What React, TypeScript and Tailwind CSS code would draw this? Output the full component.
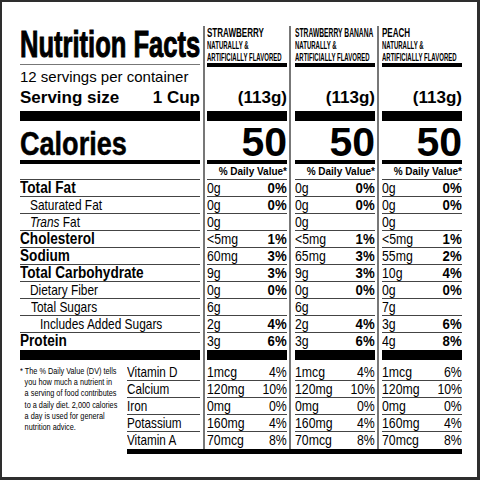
import React from 'react';

const SANS = "font-['Liberation_Sans',Arial,sans-serif]";

// Liberation Sans squeezed horizontally stands in for Helvetica Condensed
const Narrow: React.FC<{ className?: string; children: React.ReactNode }> = ({ className = 'origin-left scale-x-[0.82]', children }) => (
    <span className={`inline-block whitespace-nowrap ${className}`}>{children}</span>
);

type Nutrient = { label: React.ReactNode; bold?: boolean; indent?: string };

const NUTRIENTS: Nutrient[] = [
    { label: 'Total Fat', bold: true },
    { label: 'Saturated Fat', indent: 'pl-[10px]' },
    { label: <><i>Trans</i> Fat</>, indent: 'pl-[10px]' },
    { label: 'Cholesterol', bold: true },
    { label: 'Sodium', bold: true },
    { label: 'Total Carbohydrate', bold: true },
    { label: 'Dietary Fiber', indent: 'pl-[10px]' },
    { label: 'Total Sugars', indent: 'pl-[11px]' },
    { label: 'Includes Added Sugars', indent: 'pl-[20px]' },
    { label: 'Protein', bold: true },
];

const VITAMINS = ['Vitamin D', 'Calcium', 'Iron', 'Potassium', 'Vitamin A'];

const FOOTNOTE = [
    '* The % Daily Value (DV) tells',
    'you how much a nutrient in',
    'a serving of food contributes',
    'to a daily diet. 2,000 calories',
    'a day is used for general',
    'nutrition advice.',
];

type Flavor = {
    name: string;
    scale: string;
    block: string;
    values: [string, string][];
    vitamins: [string, string][];
};

const FLAVORS: Flavor[] = [
    {
        name: 'STRAWBERRY',
        scale: 'origin-left scale-x-[0.67]',
        block: 'ml-[3px] pl-[2px] pr-[2px]',
        values: [['0g', '0%'], ['0g', '0%'], ['0g', ''], ['<5mg', '1%'], ['60mg', '3%'], ['9g', '3%'], ['0g', '0%'], ['6g', ''], ['2g', '4%'], ['3g', '6%']],
        vitamins: [['1mcg', '4%'], ['120mg', '10%'], ['0mg', '0%'], ['160mg', '4%'], ['70mcg', '8%']],
    },
    {
        name: 'STRAWBERRY BANANA',
        scale: 'origin-left scale-x-[0.56]',
        block: 'pl-[4px] pr-[2px]',
        values: [['0g', '0%'], ['0g', '0%'], ['0g', ''], ['<5mg', '1%'], ['65mg', '3%'], ['9g', '3%'], ['0g', '0%'], ['6g', ''], ['2g', '4%'], ['3g', '6%']],
        vitamins: [['1mcg', '4%'], ['120mg', '10%'], ['0mg', '0%'], ['160mg', '4%'], ['70mcg', '8%']],
    },
    {
        name: 'PEACH',
        scale: 'origin-left scale-x-[0.67]',
        block: 'pl-[3px]',
        values: [['0g', '0%'], ['0g', '0%'], ['0g', ''], ['<5mg', '1%'], ['55mg', '2%'], ['10g', '4%'], ['0g', '0%'], ['7g', ''], ['3g', '6%'], ['4g', '8%']],
        vitamins: [['1mcg', '6%'], ['120mg', '10%'], ['0mg', '0%'], ['160mg', '4%'], ['70mcg', '8%']],
    },
];

const FlavorColumn: React.FC<{ flavor: Flavor }> = ({ flavor }) => (
    <div className={`border-l-2 border-[#777] ${flavor.block}`}>
        <div className="flex w-[80px] flex-col">
            {/* header */}
            <div className="flex h-[37px] flex-col items-start font-bold">
                <Narrow className={`text-[12px] leading-[14px] ${flavor.scale}`}>{flavor.name}</Narrow>
                <Narrow className="origin-left scale-x-[0.6] text-[10px] leading-[11.5px]">NATURALLY &amp;</Narrow>
                <Narrow className="origin-left scale-x-[0.6] text-[10px] leading-[11.5px]">ARTIFICIALLY FLAVORED</Narrow>
            </div>
            <div className="h-[4px] bg-black" />
            <div className="h-[44px] pt-[22px]">
                <div className="text-right text-[17px] font-bold leading-[17px]">(113g)</div>
            </div>
            <div className="h-[10px] bg-black" />
            <div className="h-[39px] pt-[1px] text-right text-[41px] font-bold leading-[41px]">50</div>
            <div className="h-[4px] bg-black" />
            <div className="h-[16px] border-b border-[#444] text-right text-[10px] font-bold leading-[15px]">% Daily Value*</div>
            {flavor.values.map(([amt, pct], i) => (
                <div
                    key={i}
                    className={`flex h-[17px] justify-between leading-[16px] ${i < flavor.values.length - 1 ? 'border-b border-[#444]' : ''}`}
                >
                    <Narrow className="origin-left scale-x-[0.82] text-[15px]">{amt}</Narrow>
                    <Narrow className="origin-right scale-x-[0.88] text-[15px] font-bold">{pct}</Narrow>
                </div>
            ))}
            <div className="h-[10px] bg-black" />
            <div className="pt-[4px]">
                {flavor.vitamins.map(([amt, pct], i) => (
                    <div
                        key={i}
                        className={`flex h-[17px] justify-between leading-[16px] ${i < flavor.vitamins.length - 1 ? 'border-b border-[#444]' : ''}`}
                    >
                        <Narrow className="origin-left scale-x-[0.82] text-[15px]">{amt}</Narrow>
                        <Narrow className="origin-right scale-x-[0.82] text-[15px]">{pct}</Narrow>
                    </div>
                ))}
            </div>
        </div>
    </div>
);

const App: React.FC = () => {
    return (
        <div className={`${SANS} h-[480px] w-[480px] border-t-2 border-l-2 border-r-[3px] border-b-[3px] border-[#2e2e2e] bg-white pl-[18px] pt-[24px] text-black`}>
            <div className="flex">
                {/* left column */}
                <div className="flex w-[180px] flex-col">
                    <div className="h-[37px]">
                        <h1 className="origin-left scale-x-[0.69] whitespace-nowrap text-[37px] font-bold leading-[37px] [-webkit-text-stroke:1px_black]">Nutrition Facts</h1>
                    </div>
                    <div className="h-[4px] pt-[1px]">
                        <div className="h-px bg-[#777]" />
                    </div>
                    <div className="h-[44px] pt-[1px]">
                        <div className="text-[15px] leading-[17px]">12 servings per container</div>
                        <div className="mt-[4px] flex justify-between text-[17px] font-bold leading-[17px]">
                            <span>Serving size</span>
                            <span>1 Cup</span>
                        </div>
                    </div>
                    <div className="h-[10px] bg-black" />
                    <div className="h-[39px] pt-[6px] text-[33px] font-bold leading-[33px]">
                        <Narrow className="origin-left scale-x-[0.82] [-webkit-text-stroke:0.5px_black]">Calories</Narrow>
                    </div>
                    <div className="h-[4px] bg-black" />
                    <div className="h-[16px] border-b border-[#444]" />
                    {NUTRIENTS.map((n, i) => (
                        <div
                            key={i}
                            className={`h-[17px] leading-[16px] ${n.indent ?? ''} ${i < NUTRIENTS.length - 1 ? 'border-b border-[#444]' : ''}`}
                        >
                            {n.bold ? (
                                <Narrow className="origin-left scale-x-[0.85] text-[16px] font-bold">{n.label}</Narrow>
                            ) : (
                                <Narrow className="origin-left scale-x-[0.82] text-[14.5px]">{n.label}</Narrow>
                            )}
                        </div>
                    ))}
                    <div className="h-[10px] bg-black" />
                    <div className="flex">
                        <div className="flex w-[107px] flex-col items-start pt-[5px] text-[9.5px] leading-[11.2px]">
                            {FOOTNOTE.map((line, i) => (
                                <Narrow key={i} className={`origin-left scale-x-[0.77] ${i > 0 ? 'pl-[6px]' : ''}`}>{line}</Narrow>
                            ))}
                        </div>
                        <div className="w-[73px] pt-[4px]">
                            {VITAMINS.map((v, i) => (
                                <div
                                    key={v}
                                    className={`h-[17px] leading-[16px] ${i < VITAMINS.length - 1 ? 'border-b border-[#444]' : ''}`}
                                >
                                    <Narrow className="origin-left scale-x-[0.78] text-[15px]">{v}</Narrow>
                                </div>
                            ))}
                        </div>
                    </div>
                </div>

                {FLAVORS.map(f => <FlavorColumn key={f.name} flavor={f} />)}
            </div>
            <div className="ml-[107px] h-[5px] w-[335px] bg-black" />
        </div>
    );
};

export default App;
